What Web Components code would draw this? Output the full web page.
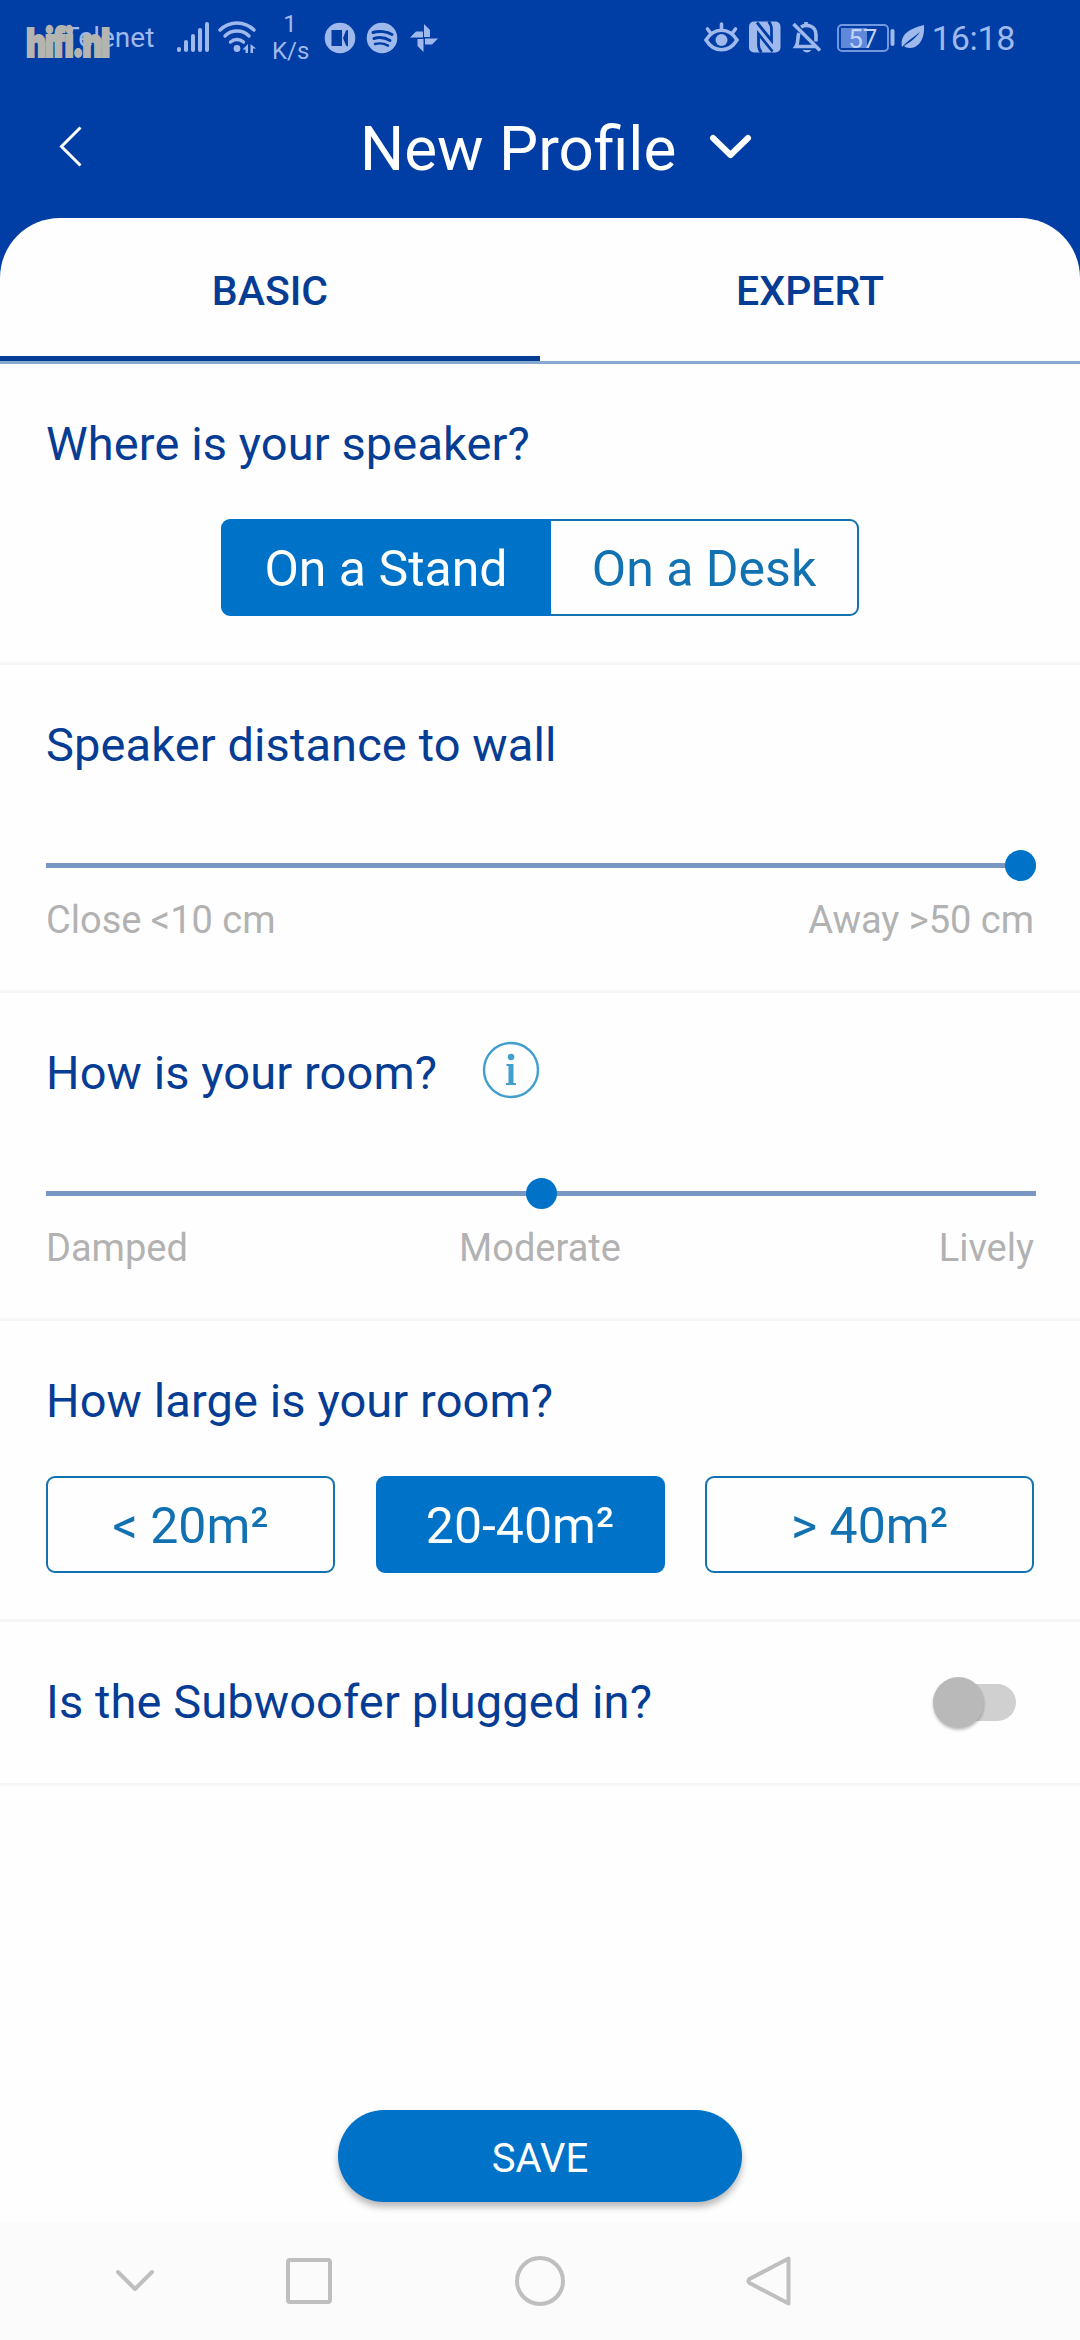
<!DOCTYPE html>
<html lang="en">
<head>
<meta charset="utf-8">
<title>New Profile</title>
<style>
    body {
        margin: 0;
        background: #fefefe;
        font-family: Roboto, "Liberation Sans", sans-serif;
        --navy: #003da5;
        --ink: #053c94;
        --accent: #0072c8;
        --line: #f7f7f7;
    }
</style>
</head>
<body>
<profile-page></profile-page>

<script>
class StatusBar extends HTMLElement {
    constructor() {
        super();
        this.attachShadow({ mode: "open" });
    }

    connectedCallback() {
        this.shadowRoot.innerHTML = `
        <style>
            :host {
                display: flex;
                justify-content: space-between;
                height: 80px;
                color: #9fb9ec;
            }
            .left, .right { display: flex; align-items: flex-start; }
            .left { padding-left: 63px; position: relative; }
            .right { padding-right: 65px; }
            svg { display: block; height: 80px; flex: none; fill: currentColor; }
            .carrier { font-size: 28px; line-height: 32px; margin-top: 22px; width: 91px; white-space: nowrap; }
            .brand {
                position: absolute;
                left: 26px;
                top: 23px;
                font: 900 40px/40px Inter, "Liberation Sans", sans-serif;
                letter-spacing: -2px;
                color: #b4b5b0;
                -webkit-text-stroke: 2px #b4b5b0;
                transform: scaleX(0.78);
                transform-origin: 0 0;
            }
            .speed { width: 36px; margin: 11px 0 0 12px; font-size: 24px; line-height: 27px; text-align: center; }
            .battery {
                box-sizing: border-box;
                width: 52px;
                height: 28px;
                margin-top: 23.5px;
                border: 2px solid #7398df;
                border-radius: 5px;
                padding-top: 2px;
                font-size: 26px;
                line-height: 22px;
                text-align: center;
                color: #bfd2f8;
                background: linear-gradient(#5f88d8, #5f88d8) 2px 2px / 26px 20px no-repeat;
            }
            .time { font-size: 34px; line-height: 40px; margin-top: 18px; letter-spacing: -0.3px; }
        </style>
        <div class="left">
            <span class="carrier">Telenet</span>
            <span class="brand">hifi.nl</span>
            <svg width="106" viewBox="154 0 106 80">
                <rect x="177" y="47" width="4" height="5" rx="2"/>
                <rect x="184" y="40" width="4" height="12" rx="2"/>
                <rect x="191" y="34" width="4" height="18" rx="2"/>
                <rect x="198" y="28" width="4" height="24" rx="2"/>
                <rect x="205" y="22" width="4" height="30" rx="2"/>
                <g fill="none" stroke="currentColor" stroke-width="3.4" stroke-linecap="round">
                    <path d="M220 30a24 24 0 0 1 34 0"/>
                    <path d="M225 36a17 17 0 0 1 24 0"/>
                    <path d="M230.500 42a9.500 9.500 0 0 1 13 0"/>
                </g>
                <circle cx="237" cy="48.500" r="3.400"/>
                <path d="M248 44v9h-2.500v-3.500h-3zM250.500 53v-9l5.500 4.500h-3v4.500z"/>
            </svg>
            <div class="speed">1<br>K/s</div>
            <svg width="130" viewBox="308 0 130 80">
                <circle cx="340" cy="38" r="15.300"/>
                <path d="M331.500 30h10.500v16h-10.500zM348 30v16.500l-2-1-3-7.500 3-7.500z" fill="#003da5"/>
                <circle cx="382" cy="38" r="15.300"/>
                <g fill="none" stroke="#003da5" stroke-width="3" stroke-linecap="round">
                    <path d="M373 32.500c6-2 14-1 19 2"/>
                    <path d="M374 38.500c5-1.500 11-1 16 2"/>
                    <path d="M375 44c4-1 9-.7 13 1.600" stroke-width="2.400"/>
                </g>
                <path d="M424 37V24l6 6v7zM425 38.500h13l-6 6h-7zM423.500 39v13l-6-6v-7zM423 37.500h-13l6-6h7z"/>
            </svg>
        </div>
        <div class="right">
            <svg width="136" viewBox="701 0 136 80">
                <g fill="none" stroke="currentColor" stroke-width="3.600" stroke-linecap="round">
                    <path d="M706 40c8-13 23-13 31 0-8 13-23 13-31 0z"/>
                    <path d="M721.500 24v6M707.500 29l3 4M735.500 29l-3 4"/>
                </g>
                <circle cx="721.500" cy="40" r="6"/>
                <rect x="749" y="21.500" width="31.500" height="31" rx="5"/>
                <g fill="none" stroke="#003da5" stroke-width="2.800">
                    <path d="M757 22.500l14.500 18V29.500c0-4-1-6-3-8"/>
                    <path d="M772.500 51.500L758.500 34v10.500c0 4 1 6 3 8"/>
                </g>
                <g fill="none" stroke="currentColor" stroke-width="3.600">
                    <path d="M793.500 24l26.500 26.500"/>
                    <path d="M799 33c-2 4 0 9-3 13.500h19M801 27c5-3 15-2 15 8v6.500M806 26v-4"/>
                </g>
                <path d="M802.500 50h9q-4.500 5-9 0z"/>
            </svg>
            <div class="battery">57</div>
            <svg width="43" viewBox="889 0 43 80">
                <rect x="890.500" y="29" width="4" height="17" rx="2"/>
                <path d="M902 47c-2-12 6-18 22-22 1 12-4 23-14 23-3 0-5-.8-6-2 6-4 11-7 16-14-7 6-13 9-18 15z"/>
            </svg>
            <span class="time">16:18</span>
        </div>`;
    }
}

class AppHeader extends HTMLElement {
    constructor() {
        super();
        this.attachShadow({ mode: "open" });
    }

    connectedCallback() {
        this.shadowRoot.innerHTML = `
        <style>
            :host {
                display: grid;
                grid-template-columns: 360px 1fr;
                height: 138px;
                color: #fff;
            }
            svg { display: block; fill: none; stroke: #fff; }
            .back { margin: 44px 0 0 56px; }
            .title { display: flex; align-items: flex-start; font-size: 62px; line-height: 70px; padding-top: 34px; }
            .title svg { margin: 15px 0 0 30px; }
        </style>
        <svg class="back" width="30" height="46" stroke-width="3"><path d="M24.500 3.500L5.500 22.500L24.500 41.500"/></svg>
        <div class="title">
            <slot></slot>
            <svg width="50" height="36" stroke-width="6" stroke-linecap="round" stroke-linejoin="round"><path d="M7 9l17.500 17L42 9"/></svg>
        </div>`;
    }
}

class TabBar extends HTMLElement {
    constructor() {
        super();
        this.attachShadow({ mode: "open" });
    }

    connectedCallback() {
        const active = Number(this.getAttribute("active"));
        const tabs = this.getAttribute("tabs").split("|");
        this.shadowRoot.innerHTML = `
        <style>
            :host {
                display: flex;
                height: 143px;
                border-bottom: 3px solid #86a9cf;
                font-weight: 500;
                font-size: 41px;
                color: var(--ink);
            }
            div {
                flex: 1;
                box-sizing: border-box;
                padding-top: 49px;
                line-height: 49px;
                text-align: center;
                border-bottom: 5px solid transparent;
            }
            .active { border-color: var(--ink); }
        </style>
        ${tabs.map((t, i) => `<div class="${i === active ? "active" : ""}">${t}</div>`).join("")}`;
    }
}

class FormSection extends HTMLElement {
    constructor() {
        super();
        this.attachShadow({ mode: "open" });
    }

    connectedCallback() {
        this.shadowRoot.innerHTML = `
        <style>
            :host {
                display: block;
                box-sizing: border-box;
                height: 301px;
                padding: 53px 46px 0;
                border-bottom: 3px solid var(--line);
            }
            :host([size="slider"]) { height: 328px; }
            :host([size="row"]) { height: 164px; }
            .head {
                display: flex;
                align-items: center;
                height: 54px;
                font-size: 47px;
                letter-spacing: 0.1px;
                line-height: 54px;
                color: var(--ink);
                white-space: nowrap;
            }
        </style>
        <div class="head"><span>${this.getAttribute("label")}</span><slot name="extra"></slot></div>
        <slot></slot>`;
    }
}

class InfoIcon extends HTMLElement {
    constructor() {
        super();
        this.attachShadow({ mode: "open" });
    }

    connectedCallback() {
        this.shadowRoot.innerHTML = `
        <style>
            :host { display: block; margin: -6px 0 0 44px; }
            svg { display: block; }
        </style>
        <svg width="60" height="60" viewBox="0 0 60 60" fill="#419fce">
            <circle cx="30" cy="30" r="27" fill="none" stroke="#419fce" stroke-width="2.400"/>
            <circle cx="30" cy="17" r="3.300"/>
            <path d="M25.500 24h7v19h2.500v2h-10v-2h2.500V26h-2z"/>
        </svg>`;
    }
}

class ChoiceGroup extends HTMLElement {
    constructor() {
        super();
        this.attachShadow({ mode: "open" });
    }

    connectedCallback() {
        const active = Number(this.getAttribute("active"));
        const options = this.getAttribute("options").split("|");
        this.shadowRoot.innerHTML = `
        <style>
            :host { display: grid; grid-template-rows: 97px; margin-top: 48px; }
            :host([joined]) { grid-template-columns: 330px 308px; justify-content: center; }
            :host(:not([joined])) { grid-template-columns: 289px 289px 329px; column-gap: 40.500px; }
            div {
                box-sizing: border-box;
                border: 2px solid #1271b1;
                border-radius: 9px;
                font-size: 50px;
                line-height: 97px;
                text-align: center;
                color: #1271b1;
                white-space: nowrap;
            }
            .active { background: var(--accent); border-color: var(--accent); color: #fff; }
            :host([joined]) div:first-of-type { border-radius: 9px 0 0 9px; }
            :host([joined]) div:last-of-type { border-left: 0; border-radius: 0 9px 9px 0; }
        </style>
        ${options.map((o, i) => `<div class="${i === active ? "active" : ""}">${o}</div>`).join("")}`;
    }
}

class RangeSlider extends HTMLElement {
    constructor() {
        super();
        this.attachShadow({ mode: "open" });
    }

    connectedCallback() {
        const value = Number(this.getAttribute("value"));
        const labels = this.getAttribute("labels").split("|");
        this.shadowRoot.innerHTML = `
        <style>
            :host { display: block; margin-top: 78px; }
            .track {
                display: flex;
                align-items: center;
                width: 990px;
                height: 31px;
                background: linear-gradient(#7997c5, #7997c5) 0 13px / 100% 5px no-repeat;
            }
            .fill { flex: ${value} 0 0; }
            .rest { flex: ${100 - value} 0 0; }
            .thumb { width: 31px; height: 31px; border-radius: 50%; background: var(--accent); }
            .labels {
                display: flex;
                margin-top: 17px;
                font-size: 38px;
                line-height: 44px;
                color: #b2b2b2;
            }
            .labels span { flex: 1; text-align: center; }
            .labels span:first-child { text-align: left; }
            .labels span:last-child { text-align: right; }
        </style>
        <div class="track"><i class="fill"></i><i class="thumb"></i><i class="rest"></i></div>
        <div class="labels">${labels.map(l => `<span>${l}</span>`).join("")}</div>`;
    }
}

class ToggleSwitch extends HTMLElement {
    constructor() {
        super();
        this.attachShadow({ mode: "open" });
    }

    connectedCallback() {
        this.shadowRoot.innerHTML = `
        <style>
            :host {
                display: flex;
                align-items: center;
                width: 78px;
                height: 37px;
                margin: 0 18px 0 auto;
                border-radius: 19px;
                background: #d0d0d0;
            }
            i {
                width: 51px;
                height: 51px;
                margin-left: -5px;
                border-radius: 50%;
                background: #b9b9b9;
                box-shadow: 0 2px 3px rgba(0, 0, 0, 0.25);
            }
        </style>
        <i></i>`;
    }
}

class SaveButton extends HTMLElement {
    constructor() {
        super();
        this.attachShadow({ mode: "open" });
    }

    connectedCallback() {
        this.shadowRoot.innerHTML = `
        <style>
            :host {
                display: block;
                width: 404px;
                height: 92px;
                margin: auto auto 20px;
                border-radius: 46px;
                background: var(--accent);
                box-shadow: 0 5px 7px rgba(0, 0, 0, 0.28);
                color: #fff;
                font-size: 40px;
                line-height: 97px;
                text-align: center;
            }
        </style>
        <slot></slot>`;
    }
}

class NavBar extends HTMLElement {
    constructor() {
        super();
        this.attachShadow({ mode: "open" });
    }

    connectedCallback() {
        this.shadowRoot.innerHTML = `
        <style>
            :host {
                display: flex;
                align-items: center;
                box-sizing: border-box;
                height: 118px;
                padding: 0 0 0 105px;
                background: #fbfbfb;
            }
            svg { fill: none; stroke: #bfbfbf; stroke-width: 4; stroke-linejoin: round; stroke-linecap: round; }
            svg + svg { margin-left: 114px; }
            svg:nth-of-type(3) { margin-left: 171px; }
            svg:nth-of-type(4) { margin-left: 170px; }
        </style>
        <svg width="60" height="60"><path d="M13 21l17 17 17-17"/></svg>
        <svg width="60" height="60"><rect x="9" y="9" width="42" height="42" rx="2"/></svg>
        <svg width="60" height="60"><circle cx="30" cy="30" r="23"/></svg>
        <svg width="60" height="60"><path d="M48.500 7.500v45L9.500 32q-2-2 0-4z"/></svg>`;
    }
}

class ProfilePage extends HTMLElement {
    constructor() {
        super();
        this.attachShadow({ mode: "open" });
    }

    connectedCallback() {
        this.shadowRoot.innerHTML = `
        <style>
            :host {
                display: flex;
                flex-direction: column;
                width: 1080px;
                height: 2340px;
                overflow: hidden;
                background: var(--navy);
            }
            main {
                flex: 1;
                display: flex;
                flex-direction: column;
                border-radius: 60px 60px 0 0;
                background: #fefefe;
            }
        </style>
        <status-bar></status-bar>
        <app-header>New Profile</app-header>
        <main>
            <tab-bar tabs="BASIC|EXPERT" active="0"></tab-bar>
            <form-section label="Where is your speaker?">
                <choice-group joined options="On a Stand|On a Desk" active="0"></choice-group>
            </form-section>
            <form-section size="slider" label="Speaker distance to wall">
                <range-slider value="100" labels="Close &amp;lt;10 cm|Away &amp;gt;50 cm"></range-slider>
            </form-section>
            <form-section size="slider" label="How is your room?">
                <info-icon slot="extra"></info-icon>
                <range-slider value="50" labels="Damped|Moderate|Lively"></range-slider>
            </form-section>
            <form-section label="How large is your room?">
                <choice-group options="&amp;lt; 20m²|20-40m²|&amp;gt; 40m²" active="1"></choice-group>
            </form-section>
            <form-section size="row" label="Is the Subwoofer plugged in?">
                <toggle-switch slot="extra"></toggle-switch>
            </form-section>
            <save-button>SAVE</save-button>
        </main>
        <nav-bar></nav-bar>`;
    }
}

customElements.define("status-bar", StatusBar);
customElements.define("app-header", AppHeader);
customElements.define("tab-bar", TabBar);
customElements.define("info-icon", InfoIcon);
customElements.define("choice-group", ChoiceGroup);
customElements.define("range-slider", RangeSlider);
customElements.define("toggle-switch", ToggleSwitch);
customElements.define("form-section", FormSection);
customElements.define("save-button", SaveButton);
customElements.define("nav-bar", NavBar);
customElements.define("profile-page", ProfilePage);
</script>
</body>
</html>
